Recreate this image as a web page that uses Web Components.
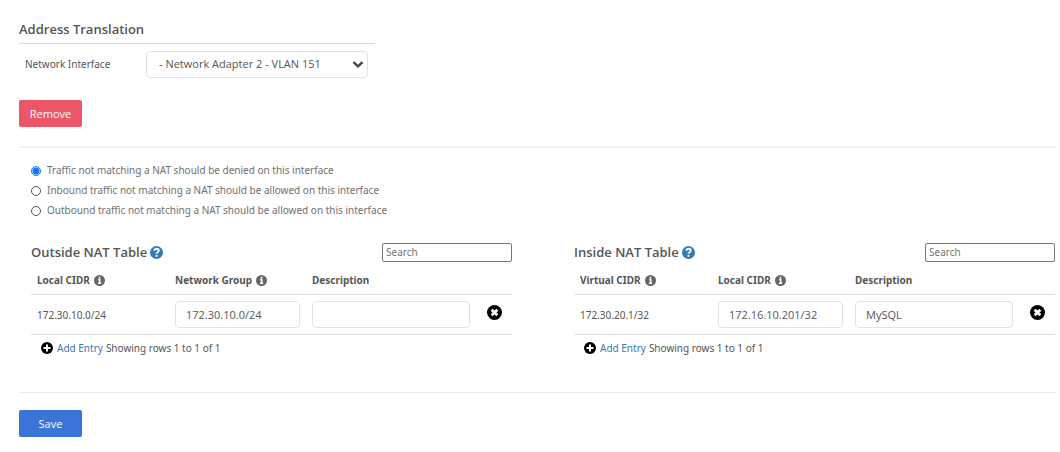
<!DOCTYPE html>
<html lang="en">
<head>
<meta charset="utf-8">
<title>Address Translation</title>
<style>
body { margin: 0; background: #fff; color: #555; font: 11px/20px "Open Sans", sans-serif; --small: "Noto Sans", sans-serif; }
</style>
</head>
<body>
<nat-page></nat-page>

<template id="page-template">
<style>
:host { display: block; padding: 19px 5px 15px 19px; }
hr { border: 0; border-top: 1px solid #eaeaea; margin: 0; }
.top { border-top: 2px solid #f1f1f1; }
.actions { margin: 22px 0 19px; }
.policies { margin-top: 12px; }
.tables { display: grid; grid-template-columns: 1fr 1fr; gap: 62px; padding-left: 12px; margin: 22px 0 34px; }
.save { margin-top: 17px; }
</style>
<nat-interface></nat-interface>
<div class="actions"><nat-button style="--fill:#ed5668">Remove</nat-button></div>
<hr class="top">
<nat-policies class="policies"></nat-policies>
<div class="tables">
  <nat-table title-text="Outside NAT Table" col1="Local CIDR" col2="Network Group" address="172.30.10.0/24" target="172.30.10.0/24" description=""></nat-table>
  <nat-table title-text="Inside NAT Table" col1="Virtual CIDR" col2="Local CIDR" address="172.30.20.1/32" target="172.16.10.201/32" description="MySQL"></nat-table>
</div>
<hr>
<div class="save"><nat-button style="--fill:#3a74d8">Save</nat-button></div>
</template>

<template id="button-template">
<style>
:host { display: block; }
button { display: block; min-width: 63px; height: 27px; padding: 0 10px; border: 0; border-radius: 2px; background: var(--fill); color: #fff; font: inherit; cursor: pointer; }
</style>
<button type="button"><slot></slot></button>
</template>

<template id="interface-template">
<style>
:host { display: block; max-width: 356px; }
h2 { margin: 0; padding-bottom: 4px; border-bottom: 1px solid #d8d8d8; font-size: 13px; line-height: 20px; font-weight: 600; }
.row { display: grid; grid-template-columns: 121px 1fr; align-items: center; padding: 7px 7px 0 6px; }
label { font-size: 10px; font-family: var(--small); padding-bottom: 1px; }
.pick { display: grid; align-items: center; }
select, svg { grid-area: 1 / 1; }
select { appearance: none; width: 100%; height: 27px; padding: 0 24px 1px 12px; border: 1px solid #e2e2e2; border-radius: 4px; background: #fff; color: #555; font: inherit; }
svg { justify-self: end; margin-right: 4px; pointer-events: none; }
</style>
<h2>Address Translation</h2>
<div class="row">
  <label for="iface">Network Interface</label>
  <div class="pick">
    <select id="iface"><option>- Network Adapter 2 - VLAN 151</option></select>
    <svg width="12" height="8" viewBox="0 0 12 8" aria-hidden="true"><path d="M1.500 1.200 6 5.400l4.500-4.200" fill="none" stroke="#444" stroke-width="2.400"/></svg>
  </div>
</div>
</template>

<template id="policies-template">
<style>
:host { display: block; padding-left: 12px; color: #707070; font-size: 10px; font-family: var(--small); }
label { display: flex; align-items: center; gap: 6px; height: 20px; }
input { appearance: none; flex: none; width: 10px; height: 10px; margin: 1px 0 0; border: 1px solid #555; border-radius: 50%; background: #fff; }
input:checked { border-color: #1576f5; background: radial-gradient(circle, #1576f5 3px, #fff 4px); }
</style>
<label><input type="radio" name="policy" checked>Traffic not matching a NAT should be denied on this interface</label>
<label><input type="radio" name="policy">Inbound traffic not matching a NAT should be allowed on this interface</label>
<label><input type="radio" name="policy">Outbound traffic not matching a NAT should be allowed on this interface</label>
</template>

<template id="icon-template">
<style>
:host { display: inline-block; width: var(--size, 12px); height: var(--size, 12px); }
svg { display: block; width: 100%; height: 100%; }
</style>
<svg viewBox="0 0 24 24" aria-hidden="true"><circle cx="12" cy="12" r="12" fill="currentColor"/><path fill="none" stroke="#fff"/></svg>
</template>

<template id="table-template">
<style>
:host { display: block; min-width: 0; }
header { display: flex; justify-content: space-between; align-items: center; height: 20px; }
h3 { display: flex; align-items: center; gap: 3px; margin: 0; font-size: 13px; line-height: 20px; font-weight: 600; }
h3 span { display: block; }
input { box-sizing: border-box; font: inherit; color: #555; background: #fff; }
.search { width: 130px; height: 19px; padding: 0 3px; border: 1px solid #777; border-radius: 2px; font-size: 10px; font-family: var(--small); }
.search::placeholder { color: #757575; opacity: 1; }
table { width: 100%; table-layout: fixed; border-collapse: collapse; margin-top: 5px; }
th, td { padding: 0 6px; text-align: left; font-size: 10px; font-family: var(--small); }
th { height: 26px; padding-bottom: 1px; font-weight: 700; border-bottom: 1px solid #ddd; white-space: nowrap; }
.label { display: flex; align-items: center; gap: 4px; }
td { height: 39px; border-bottom: 1px solid #ddd; }
td input { display: block; width: 100%; height: 27px; padding: 0 10px; border: 1px solid #e2e2e2; border-radius: 4px; font-size: 11px; font-family: "Open Sans", sans-serif; }
.first { width: 126px; }
.second { width: 125px; }
.last { width: 24px; }
td button { display: block; margin: 0 auto; padding: 0 0 4px; border: 0; background: none; color: #000; cursor: pointer; }
td nat-icon { display: block; }
footer { display: flex; align-items: center; gap: 3px; padding: 3px 0 0 10px; font-size: 10px; font-family: var(--small); }
a { display: flex; align-items: center; gap: 4px; color: #337ab7; text-decoration: none; }
.question { --size: 13px; color: #337ab7; }
.info { --size: 11px; color: #666; }
.plus { --size: 12px; color: #000; }
.remove { --size: 15px; }
</style>
<header>
  <h3><span data-text="title-text"></span><nat-icon class="question" name="question"></nat-icon></h3>
  <input class="search" type="search" placeholder="Search" aria-label="Search">
</header>
<table>
  <thead><tr>
    <th class="first"><div class="label"><span data-text="col1"></span><nat-icon class="info" name="info"></nat-icon></div></th>
    <th class="second"><div class="label"><span id="group" data-text="col2"></span><nat-icon class="info" name="info"></nat-icon></div></th>
    <th id="desc">Description</th>
    <th class="last"></th>
  </tr></thead>
  <tbody><tr>
    <td data-text="address"></td>
    <td><input type="text" aria-labelledby="group" data-value="target"></td>
    <td><input type="text" aria-labelledby="desc" data-value="description"></td>
    <td><button type="button" aria-label="Remove entry"><nat-icon class="remove" name="cross"></nat-icon></button></td>
  </tr></tbody>
</table>
<footer><a href="#"><nat-icon class="plus" name="plus"></nat-icon>Add Entry</a><span>Showing rows 1 to 1 of 1</span></footer>
</template>

<script>
class TemplateElement extends HTMLElement {
  constructor() {
    super();
    this.attachShadow({ mode: "open" });
    this.shadowRoot.append(document.getElementById(this.constructor.template).content.cloneNode(true));
  }
}
class NatIcon extends TemplateElement {
  static template = "icon-template";
  static shapes = {
    question: ["M7.500 8.500C8.500 5.500 10 5 12 5c2.500 0 4.200 1.500 4.200 3.500 0 3-4.200 3-4.200 6M12 16.500v3.500", 3.4],
    info: ["M9 10.500h3.500V18M8.500 18h7M12 4v4", 3.4],
    plus: ["M12 5v14M5 12h14", 4],
    cross: ["M7.500 7.500l9 9M16.500 7.500l-9 9", 4.5]
  };
  connectedCallback() {
    const [d, width] = NatIcon.shapes[this.getAttribute("name")];
    const path = this.shadowRoot.querySelector("path");
    path.setAttribute("d", d);
    path.setAttribute("stroke-width", width);
  }
}
class NatButton extends TemplateElement { static template = "button-template"; }
class NatInterface extends TemplateElement { static template = "interface-template"; }
class NatPolicies extends TemplateElement { static template = "policies-template"; }
class NatTable extends TemplateElement {
  static template = "table-template";
  connectedCallback() {
    for (const el of this.shadowRoot.querySelectorAll("[data-text]")) el.textContent = this.getAttribute(el.dataset.text);
    for (const el of this.shadowRoot.querySelectorAll("[data-value]")) el.value = this.getAttribute(el.dataset.value);
  }
}
class NatPage extends TemplateElement { static template = "page-template"; }
customElements.define("nat-icon", NatIcon);
customElements.define("nat-button", NatButton);
customElements.define("nat-interface", NatInterface);
customElements.define("nat-policies", NatPolicies);
customElements.define("nat-table", NatTable);
customElements.define("nat-page", NatPage);
</script>
</body>
</html>
